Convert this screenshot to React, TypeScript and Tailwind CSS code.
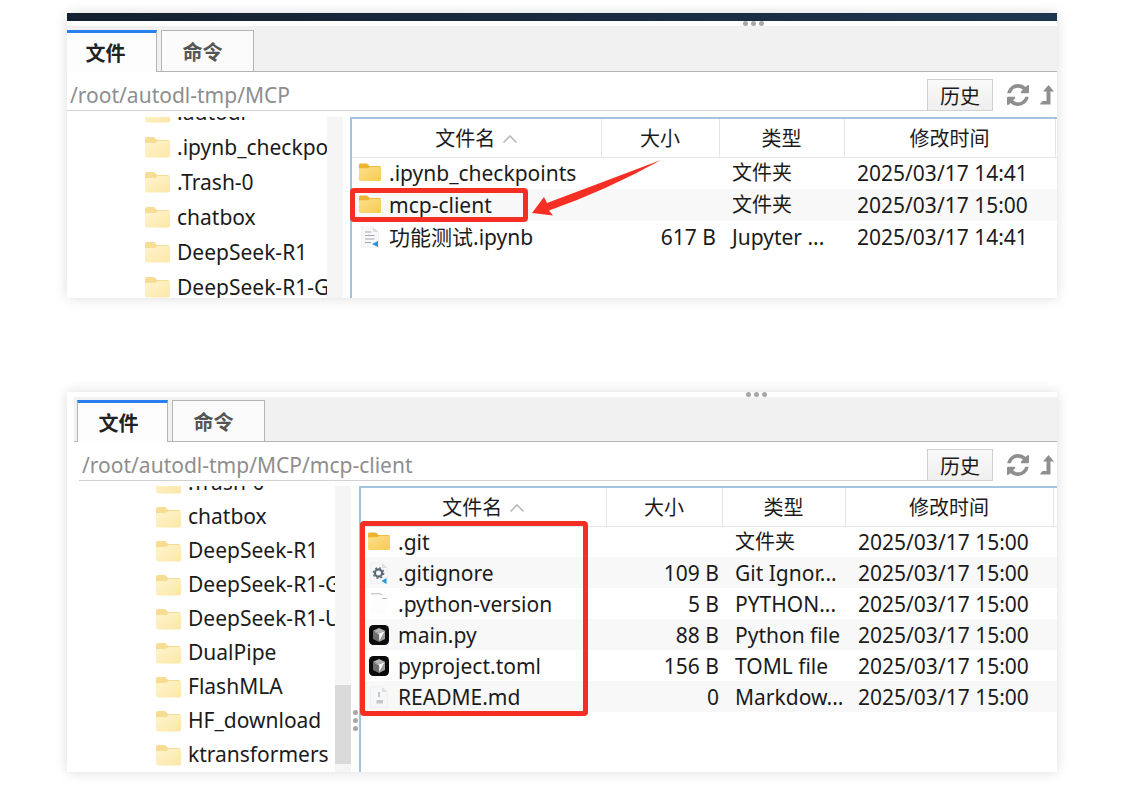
import React from "react";

type Row = { icon: string; name: string; size: string; type: string; date: string; marked?: boolean };

type PanelProps = {
  id: string;
  topBar: boolean;
  path: string;
  tree: string[];
  rows: Row[];
};

const UI_FONT = "font-['Noto_Sans','Noto_Sans_CJK_SC',sans-serif]";

function TreeFolder() {
  return (
    <svg viewBox="0 0 25 21" className="h-[21px] w-[25px] shrink-0" aria-hidden="true">
      <defs>
        <linearGradient id="treeFolder" x1="0" y1="0" x2="1" y2="1">
          <stop offset="0" stopColor="#fff4cf" />
          <stop offset="1" stopColor="#fbe7a6" />
        </linearGradient>
      </defs>
      <path d="M0 2Q0 0 2 0H8Q9.500 0 10.500 1.300L12 3H23Q24.500 3 24.500 4.500V12H0Z" fill="#f7dd93" />
      <path d="M0 7Q0 6 1.200 6H9.500Q10.800 6 11.600 5L12.300 4H23.500Q25 4 25 5.500V18.500Q25 20.500 23 20.500H2Q0 20.500 0 18.500Z" fill="url(#treeFolder)" />
    </svg>
  );
}

function FileIcon({ kind }: { kind: string }) {
  if (kind === "folder") {
    return (
      <svg viewBox="0 0 22 22" className="h-[22px] w-[22px] shrink-0" aria-hidden="true">
        <defs>
          <linearGradient id="rowFolder" x1="0" y1="0" x2="1" y2="1">
            <stop offset="0" stopColor="#fde08a" />
            <stop offset="1" stopColor="#f6cb54" />
          </linearGradient>
        </defs>
        <path d="M0 3Q0 1.500 1.500 1.500H7Q8.300 1.500 9.200 2.600L10.500 4H20.500Q22 4 22 5.500V12H0Z" fill="#eeb42f" />
        <path d="M0 7.200Q0 6.300 1 6.300H8.500Q9.600 6.300 10.300 5.500L11 4.700H21Q22 4.700 22 5.800V17.500Q22 19 20.500 19H1.500Q0 19 0 17.500Z" fill="url(#rowFolder)" />
      </svg>
    );
  }
  if (kind === "cube") {
    return (
      <svg viewBox="0 0 22 22" className="h-[22px] w-[22px] shrink-0" aria-hidden="true">
        <rect x="1" y="1" width="20" height="20" rx="4.500" fill="#0a0a0a" />
        <path d="M11 4L17 6.800L11 9.600L5 6.800Z" fill="#b5b5b5" />
        <path d="M5 6.800L11 9.600V18L5 15Z" fill="#6e6e6e" />
        <path d="M17 6.800L11 9.600V18L17 15Z" fill="#9c9c9c" />
        <path d="M5.500 7.200L11 9.600L16.500 7.200L11.300 16.500V10.500Z" fill="#ffffff" />
      </svg>
    );
  }
  if (kind === "blank") {
    return (
      <svg viewBox="0 0 22 22" className="h-[22px] w-[22px] shrink-0" aria-hidden="true">
        <path d="M3 .5H13.500L19 6V21.500H3Z" fill="#fdfdfd" />
        <path d="M3 .8H13L14.500 2.500" fill="none" stroke="#b9b9b9" />
        <path d="M14.500 5.500H19" stroke="#b9b9b9" />
      </svg>
    );
  }
  return (
    <svg viewBox="0 0 22 22" className="h-[22px] w-[22px] shrink-0" aria-hidden="true">
      <path d="M2.500 1H14L19.500 6V21.500H2.500Z" fill="#f6f7f8" stroke="#ececec" strokeWidth=".7" />
      <path d="M14 1V6H19.500Z" fill="#dedede" />
      {kind === "notebook" && (
        <>
          <path d="M6 6H12M6 9.500H15.500M6 13H15.500M6 16.500H12" stroke="#a4a8ad" strokeWidth="1.200" />
          <path d="M19 15L13 18L19 21Z" fill="#2196dd" />
        </>
      )}
      {kind === "gear" && (
        <>
          <circle cx="10.500" cy="11" r="3.600" fill="none" stroke="#5c6a76" strokeWidth="2.200" />
          <circle cx="10.500" cy="11" r="5.200" fill="none" stroke="#5c6a76" strokeWidth="1.400" strokeDasharray="2 2.080" />
          <path d="M18.500 16L13.500 19L18.500 22Z" fill="#2196dd" />
        </>
      )}
      {kind === "markdown" && <path d="M10 6H12V11H10ZM8.500 14H15V17.500H8.500Z" fill="#c4c8cd" />}
    </svg>
  );
}

function RefreshIcon() {
  return (
    <svg viewBox="0 0 1536 1536" className="h-[22px] w-[22px]" fill="#8f8f8f" aria-hidden="true">
      <path d="M1511 928q0 5-1 7-64 268-268 434.500t-478 166.500q-146 0-282.500-55t-243.500-157l-129 129q-19 19-45 19t-45-19-19-45v-448q0-26 19-45t45-19h448q26 0 45 19t19 45-19 45l-137 137q71 66 161 102t187 36q134 0 250-65t186-179q11-17 53-117 8-23 30-23h192q13 0 22.500 9.500t9.500 22.500zm25-800v448q0 26-19 45t-45 19h-448q-26 0-45-19t-19-45 19-45l138-138q-148-137-349-137-134 0-250 65t-186 179q-11 17-53 117-8 23-30 23h-199q-13 0-22.500-9.500t-9.500-22.500v-7q65-268 270-434.500t480-166.500q146 0 284 55.500t245 156.500l130-129q19-19 45-19t45 19 19 45z" />
    </svg>
  );
}

function LevelUpIcon() {
  return (
    <svg viewBox="0 0 14 20" className="h-[20px] w-[14px]" fill="#8f8f8f" aria-hidden="true">
      <path d="M8.500 0L14 6.500H10.500V19.500H.5L0 19L2.500 16H6.500V6.500H3Z" />
    </svg>
  );
}

function Dots({ vertical }: { vertical?: boolean }) {
  return (
    <div className={vertical ? "flex flex-col gap-[3px]" : "flex gap-[3px]"} aria-hidden="true">
      <span className="size-[5px] rounded-full bg-[#a8a8a8]" />
      <span className="size-[5px] rounded-full bg-[#a8a8a8]" />
      <span className="size-[5px] rounded-full bg-[#a8a8a8]" />
    </div>
  );
}

function Panel({ id, topBar, path, tree, rows }: PanelProps) {
  const first = topBar;
  return (
    <section className="overflow-hidden bg-white shadow-[0_0_12px_rgba(0,0,0,0.14)]">
      {first && <div className="h-[8px] bg-linear-to-r from-[#14202f] to-[#1d3650]" />}
      <div className="relative h-[5px] bg-white">
        <div className={first ? "absolute top-0 left-[676px]" : "absolute top-0 left-[679px]"}>
          <Dots />
        </div>
      </div>
      <div className={first ? "" : "pl-[7px]"}>
        <div
          className={
            first
              ? "flex h-[46px] items-end gap-1 border-b border-[#b4b4b4] bg-[#f1f1f1]"
              : "flex h-[45px] items-end gap-1 border-b border-[#b4b4b4] bg-[#f1f1f1] pl-[3px]"
          }
          role="tablist"
        >
          <button
            type="button"
            role="tab"
            aria-selected="true"
            className={
              first
                ? "-mb-px h-[42px] w-[90px] border-t-3 border-r border-t-[#2a7ff0] border-r-[#b4b4b4] bg-[#fdfdfd] pt-[3px] pr-[12px] text-[20px] leading-[36px] font-bold text-[#222]"
                : "-mb-px h-[42px] w-[91px] border-x border-t-3 border-x-[#b4b4b4] border-t-[#2a7ff0] bg-[#fdfdfd] pt-[3px] pr-[8px] text-[20px] leading-[36px] font-bold text-[#222]"
            }
          >
            文件
          </button>
          <button
            type="button"
            role="tab"
            aria-selected="false"
            className="-mb-px h-[42px] w-[93px] border border-[#b4b4b4] bg-[#fbfbfb] pt-[4px] pr-[10px] text-[20px] leading-[36px] font-bold text-[#555]"
          >
            命令
          </button>
        </div>
      </div>
      <div className={first ? "flex h-[39px]" : "flex h-[39px] pl-[12px]"}>
        <div className="flex min-w-0 flex-1 items-end border-b border-[#d2d2d2]">
          <input
            aria-label="路径"
            readOnly
            value={path}
            className="h-full min-w-0 flex-1 bg-transparent px-[3px] pt-[7px] text-[21px] text-[#8e8e8e] outline-none"
          />
          <button
            type="button"
            className="h-[31px] w-[66px] border border-b-0 border-[#cfcfcf] bg-linear-to-b from-[#f9f9f9] to-[#efefef] pt-[3px] text-[20px] leading-[27px] text-[#1a1a1a]"
          >
            历史
          </button>
        </div>
        <div className="flex w-[64px] items-center justify-between pt-[7px] pr-[3px] pl-[14px]">
          <button type="button" aria-label="刷新"><RefreshIcon /></button>
          <button type="button" aria-label="上级目录"><LevelUpIcon /></button>
        </div>
      </div>
      <div className={first ? "mt-[6px] flex h-[181px]" : "mt-[5px] flex h-[286px]"}>
        <ul className={first ? "w-[260px] shrink-0 overflow-hidden pl-[78px]" : "w-[268px] shrink-0 overflow-hidden pl-[89px]"}>
          {tree.map((name, i) => (
            <li
              key={name}
              className={
                (i === 0 ? (first ? "-mt-[22px] " : "-mt-[20px] ") : "") +
                (first ? "h-[35px]" : "h-[34px]") +
                " flex items-center gap-[7px] whitespace-nowrap text-[21px] text-[#1b1b1b]"
              }
            >
              <TreeFolder />
              <span>{name}</span>
            </li>
          ))}
        </ul>
        <div className="flex w-[16px] shrink-0 flex-col justify-end bg-[#f5f5f5] pb-[8px]">
          {!first && <div className="h-[79px] bg-[#dadada]" />}
        </div>
        <div className={first ? "w-[7px] shrink-0" : "flex w-[8px] shrink-0 flex-col items-center justify-end pb-[41px]"}>
          {!first && <Dots vertical />}
        </div>
        <div className="relative min-w-0 flex-1 border-t-2 border-l-2 border-[#a3c3df]">
          <table className="w-full table-fixed border-collapse text-[21px] text-[#1b1b1b]">
            <colgroup>
              <col />
              <col className={first ? "w-[118px]" : "w-[116px]"} />
              <col className={first ? "w-[125px]" : "w-[123px]"} />
              <col className={first ? "w-[211px]" : "w-[208px]"} />
              <col className={first ? "w-[2px]" : "w-[4px]"} />
            </colgroup>
            <thead>
              <tr className="h-[38px] border-b border-[#e3e6ea] text-[20px] leading-[30px]">
                <th scope="col" className="p-0 pt-[3px] font-normal">
                  <span className="flex items-center justify-center gap-[8px]">
                    文件名
                    <svg viewBox="0 0 14 8" className="h-[8px] w-[14px]" fill="none" stroke="#b5b5b5" strokeWidth="1.500" aria-hidden="true">
                      <path d="M.5 7.500L7 1L13.500 7.500" />
                    </svg>
                  </span>
                </th>
                <th scope="col" className="border-l border-[#e3e6ea] p-0 pt-[3px] font-normal">大小</th>
                <th scope="col" className="border-l border-[#e3e6ea] p-0 pt-[3px] font-normal">类型</th>
                <th scope="col" className="border-l border-[#e3e6ea] p-0 pt-[3px] font-normal">修改时间</th>
                <td className="border-l border-[#e3e6ea] p-0" />
              </tr>
            </thead>
            <tbody>
              {rows.map((r) => (
                <tr key={id + r.name} className={first ? "h-[32px] even:bg-[#f8f8f8]" : "h-[31px] even:bg-[#f8f8f8]"}>
                  <td className="relative p-0 pl-[7px]">
                    <span className="flex items-center gap-[8px] whitespace-nowrap leading-[30px]">
                      <FileIcon kind={r.icon} />
                      {r.name}
                    </span>
                    {r.marked && (
                      <>
                        <span className="absolute -top-px -left-[2px] h-[34px] w-[178px] rounded-[4px] border-5 border-[#f62f25]" />
                        <svg viewBox="0 0 129 56" className="absolute bottom-[5px] left-[180px] h-[56px] w-[129px]" fill="#f62f25" aria-hidden="true">
                          <path d="M129 0L15 43L12 37L0 53L21 55.500L17 50.500Q75 30 129 0Z" />
                        </svg>
                      </>
                    )}
                  </td>
                  <td className="p-0 pr-[3px] text-right leading-[30px]">{r.size}</td>
                  <td
                    className={
                      r.icon === "folder"
                        ? "p-0 pl-[13px] text-[20px] leading-[30px] whitespace-nowrap"
                        : "p-0 pl-[13px] leading-[30px] whitespace-nowrap"
                    }
                  >
                    {r.type}
                  </td>
                  <td className="p-0 pl-[13px] leading-[30px] whitespace-nowrap">{r.date}</td>
                  <td className="p-0" />
                </tr>
              ))}
            </tbody>
          </table>
          {!first && <div className="absolute top-[33px] -left-px h-[195px] w-[228px] rounded-[4px] border-5 border-[#f62f25]" />}
        </div>
      </div>
    </section>
  );
}

const topTree = [".autodl", ".ipynb_checkpoints", ".Trash-0", "chatbox", "DeepSeek-R1", "DeepSeek-R1-G"];
const bottomTree = [
  ".Trash-0",
  "chatbox",
  "DeepSeek-R1",
  "DeepSeek-R1-G",
  "DeepSeek-R1-U",
  "DualPipe",
  "FlashMLA",
  "HF_download",
  "ktransformers",
];

const topRows: Row[] = [
  { icon: "folder", name: ".ipynb_checkpoints", size: "", type: "文件夹", date: "2025/03/17 14:41" },
  { icon: "folder", name: "mcp-client", size: "", type: "文件夹", date: "2025/03/17 15:00", marked: true },
  { icon: "notebook", name: "功能测试.ipynb", size: "617 B", type: "Jupyter ...", date: "2025/03/17 14:41" },
];

const bottomRows: Row[] = [
  { icon: "folder", name: ".git", size: "", type: "文件夹", date: "2025/03/17 15:00" },
  { icon: "gear", name: ".gitignore", size: "109 B", type: "Git Ignor...", date: "2025/03/17 15:00" },
  { icon: "blank", name: ".python-version", size: "5 B", type: "PYTHON...", date: "2025/03/17 15:00" },
  { icon: "cube", name: "main.py", size: "88 B", type: "Python file", date: "2025/03/17 15:00" },
  { icon: "cube", name: "pyproject.toml", size: "156 B", type: "TOML file", date: "2025/03/17 15:00" },
  { icon: "markdown", name: "README.md", size: "0", type: "Markdow...", date: "2025/03/17 15:00" },
];

export default function App() {
  return (
    <main className={`${UI_FONT} flex min-h-screen flex-col gap-[94px] bg-white pt-[13px] pr-[82px] pb-[28px] pl-[67px]`}>
      <Panel id="root" topBar path="/root/autodl-tmp/MCP" tree={topTree} rows={topRows} />
      <Panel id="client" topBar={false} path="/root/autodl-tmp/MCP/mcp-client" tree={bottomTree} rows={bottomRows} />
    </main>
  );
}
